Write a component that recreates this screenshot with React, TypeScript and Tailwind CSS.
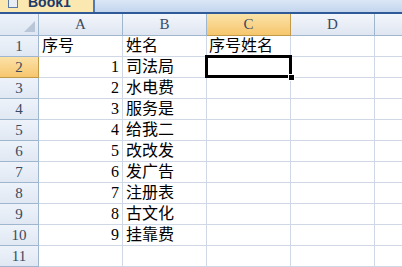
import React from "react";

const rows: [string, string][] = [
  ["序号", "姓名"],
  ["1", "司法局"],
  ["2", "水电费"],
  ["3", "服务是"],
  ["4", "给我二"],
  ["5", "改改发"],
  ["6", "发广告"],
  ["7", "注册表"],
  ["8", "古文化"],
  ["9", "挂靠费"],
  ["", ""],
];

const font = { fontFamily: '"Liberation Serif", "Noto Sans CJK SC", serif' };

export default function App() {
  return (
    <div className="w-[402px] h-[267px] overflow-hidden bg-white text-[16px] text-black" style={font}>
      {/* tab bar */}
      <div className="h-[14px] flex bg-gradient-to-b from-[#dbe7f6] to-[#c3d5ee] border-b-2 border-[#2f5a97]">
        <div className="w-[95px] h-[12px] bg-[#fbe7b0] border-r-2 border-[#4f7bb8] flex items-end overflow-hidden relative">
          <div className="absolute left-[8px] top-[-4px] w-[10px] h-[12px] border border-[#5a7aa8] bg-[#e9eef5]" />
          <span className="absolute left-[28px] top-[-7px] text-[14px] leading-[18px] font-bold text-[#1c3a6b]" style={{ fontFamily: '"Liberation Sans", sans-serif' }}>
            Book1
          </span>
        </div>
        <div className="flex-1" />
      </div>
      {/* header row */}
      <div className="flex h-[22px]">
        <div className="w-[39px] shrink-0 border-r border-b border-[#9eb6ce] bg-gradient-to-b from-[#eef3fa] to-[#dde6f2] relative">
          <svg className="absolute right-[3px] bottom-[3px]" width="11" height="11" viewBox="0 0 11 11">
            <polygon points="11,0 11,11 0,11" fill="#b9c6d8" />
          </svg>
        </div>
        {["A", "B", "C", "D"].map((c) => (
          <div
            key={c}
            className={
              "w-[84px] shrink-0 border-r border-b flex items-center justify-center text-[15px] text-[#3a4a60] " +
              (c === "C"
                ? "bg-gradient-to-b from-[#fbe2a8] to-[#f6c66c] border-[#c29b4a]"
                : "bg-gradient-to-b from-[#f3f6fb] to-[#dfe6f1] border-[#9eb6ce]")
            }
          >
            {c}
          </div>
        ))}
        <div className="flex-1 border-b border-[#9eb6ce] bg-gradient-to-b from-[#f3f6fb] to-[#dfe6f1]" />
      </div>
      {rows.map((r, i) => (
        <div key={i} className="flex h-[21px]">
          <div
            className={
              "w-[39px] shrink-0 border-r border-b flex items-center justify-center text-[15px] text-[#3a4a60] " +
              (i === 1
                ? "bg-gradient-to-b from-[#fbe2a8] to-[#f6c66c] border-[#c29b4a]"
                : "bg-gradient-to-b from-[#eef3fa] to-[#e0e8f3] border-[#9eb6ce]")
            }
          >
            {i + 1}
          </div>
          <div className={"w-[84px] shrink-0 border-r border-b border-[#d0d7e5] flex items-center px-[3px] leading-none " + (i === 0 ? "justify-start" : "justify-end")}>
            {r[0]}
          </div>
          <div className="w-[84px] shrink-0 border-r border-b border-[#d0d7e5] flex items-center px-[3px] leading-none">
            {r[1]}
          </div>
          <div className="w-[84px] shrink-0 border-r border-b border-[#d0d7e5] flex items-center px-[2px] leading-none relative">
            {i === 0 ? "序号姓名" : ""}
            {i === 1 && (
              <div className="absolute z-10 left-[-2px] top-[-2px] w-[87px] h-[23px] border-[3px] border-black">
                <div className="absolute right-[-6px] bottom-[-6px] w-[7px] h-[7px] bg-black border border-white" />
              </div>
            )}
          </div>
          <div className="w-[84px] shrink-0 border-r border-b border-[#d0d7e5]" />
          <div className="flex-1 border-b border-[#d0d7e5]" />
        </div>
      ))}
    </div>
  );
}
